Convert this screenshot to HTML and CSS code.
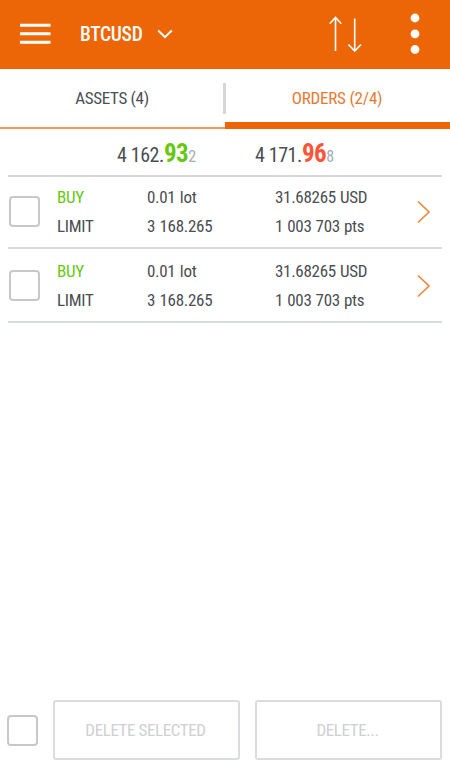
FILE: index.html
```html
<!DOCTYPE html>
<html lang="en">
<head>
<meta charset="utf-8">
<title>Orders</title>
<link rel="stylesheet" href="styles.css">
</head>
<body>
<header class="bar">
  <svg class="menu" width="31" height="22" viewBox="0 0 31 22"><path d="M0 2.2h30.5M0 10.8h30.5M0 19.2h30.5" stroke="#fff" stroke-width="3"/></svg>
  <span class="symbol">BTCUSD</span>
  <svg class="caret" width="17" height="11" viewBox="0 0 17 11"><path d="M1.2 1.5 8 8.2 14.8 1.5" fill="none" stroke="#fff" stroke-width="2"/></svg>
  <svg class="sort" width="34" height="37" viewBox="0 0 34 37"><path d="M7.5 35V1.5M1.7 7.7 7.5 1.5 13.3 7.7M26.7 2.5V35M20.4 28.5 26.7 35 33 28.5" fill="none" stroke="#fff" stroke-width="1.6"/></svg>
  <svg class="more" width="10" height="42" viewBox="0 0 10 42"><g fill="#fff"><circle cx="5" cy="5" r="4.4"/><circle cx="5" cy="20.8" r="4.4"/><circle cx="5" cy="36.5" r="4.4"/></g></svg>
</header>
<nav class="tabs">
  <div class="tab"><span>ASSETS (4)</span></div>
  <div class="tab active"><span>ORDERS (2/4)</span></div>
</nav>
<main>
  <section class="quotes">
    <div class="quote bid"><span class="base">4 162.</span><b>93</b><small>2</small></div>
    <div class="quote ask"><span class="base">4 171.</span><b>96</b><small>8</small></div>
  </section>
  <article class="order">
    <i class="check"></i>
    <div class="cell side"><span class="buy">BUY</span><span>LIMIT</span></div>
    <div class="cell lot"><span>0.01 lot</span><span>3 168.265</span></div>
    <div class="cell value"><span>31.68265 USD</span><span>1 003 703 pts</span></div>
    <svg class="next" width="14" height="23" viewBox="0 0 14 23"><path d="M1 .5 12 11 1 21.5" fill="none" stroke="#ef8538" stroke-width="1.6"/></svg>
  </article>
  <article class="order">
    <i class="check"></i>
    <div class="cell side"><span class="buy">BUY</span><span>LIMIT</span></div>
    <div class="cell lot"><span>0.01 lot</span><span>3 168.265</span></div>
    <div class="cell value"><span>31.68265 USD</span><span>1 003 703 pts</span></div>
    <svg class="next" width="14" height="23" viewBox="0 0 14 23"><path d="M1 .5 12 11 1 21.5" fill="none" stroke="#ef8538" stroke-width="1.6"/></svg>
  </article>
</main>
<footer class="actions">
  <i class="check"></i>
  <button><span>DELETE SELECTED</span></button>
  <button><span>DELETE...</span></button>
</footer>
</body>
</html>
```

FILE: styles.css
```css
* { box-sizing: border-box; }
body {
  margin: 0;
  height: 768px;
  display: flex;
  flex-direction: column;
  background: #fff;
  color: #4b4e52;
  font: 17px/29px "Roboto Condensed", Roboto, sans-serif;
  font-stretch: 75%;
  letter-spacing: -0.3px;
}
svg { display: block; flex: none; }
.bar {
  height: 69px;
  display: flex;
  align-items: center;
  padding: 0 30px 1px 20px;
  background: #ec6608;
  color: #fff;
}
.symbol { width: 62px; margin-left: 29px; font-size: 19.5px; font-weight: 500; letter-spacing: -0.3px; white-space: nowrap; }
.caret { margin-left: 15px; }
.sort { margin-left: auto; }
.more { margin-left: 48px; }
.tabs { display: flex; height: 60px; }
.tab {
  flex: 1;
  display: flex;
  justify-content: center;
  position: relative;
  padding-top: 15px;
  border-bottom: 2px solid #f29a5c;
}
.tab span { margin-right: 1px; }
.tab.active { color: #e47a30; border-bottom: 7px solid #ec6608; letter-spacing: -0.2px; }
.tab.active::before { content: ""; position: absolute; left: -2px; top: 14px; width: 3px; height: 31px; background: #d5d6d8; }
main { flex: 1; padding: 0 8px; }
.quotes { height: 48px; display: flex; padding-left: 109px; border-bottom: 2px solid #d6d9dc; }
.quote { display: flex; align-items: baseline; width: 138px; font-size: 20px; line-height: 50px; letter-spacing: -0.4px; white-space: nowrap; }
.quote b { font-size: 25px; letter-spacing: -0.5px; }
.quote small { font-size: 16px; color: #a9acb2; }
.bid b { color: #66c810; }
.ask b { color: #ff5436; }
.order { height: 72px; display: flex; align-items: center; border-bottom: 2px solid #d8dbdd; }
.order + .order { height: 74px; padding-top: 2px; }
.check { flex: none; width: 31px; height: 31px; border: 2px solid #c8c8ca; border-radius: 4px; }
.order .check { margin-left: 1px; margin-bottom: 1px; }
.cell { display: flex; flex-direction: column; white-space: nowrap; }
.side { width: 90px; margin-left: 17px; }
.lot { width: 128px; word-spacing: 0.8px; }
.value { flex: 1; word-spacing: 0.5px; }
.buy { color: #66c810; }
.next { margin-right: 11px; }
.actions { display: flex; align-items: center; padding: 0 8px 8px 7px; }
.actions button {
  flex: none;
  width: 187px;
  height: 60px;
  margin-left: 15px;
  padding: 0;
  border: 2px solid #dadce0;
  border-radius: 3px;
  background: #fff;
  color: #ced0d3;
  font: inherit;
  letter-spacing: -0.4px;
}
.actions button span { margin-right: 2px; }
```
